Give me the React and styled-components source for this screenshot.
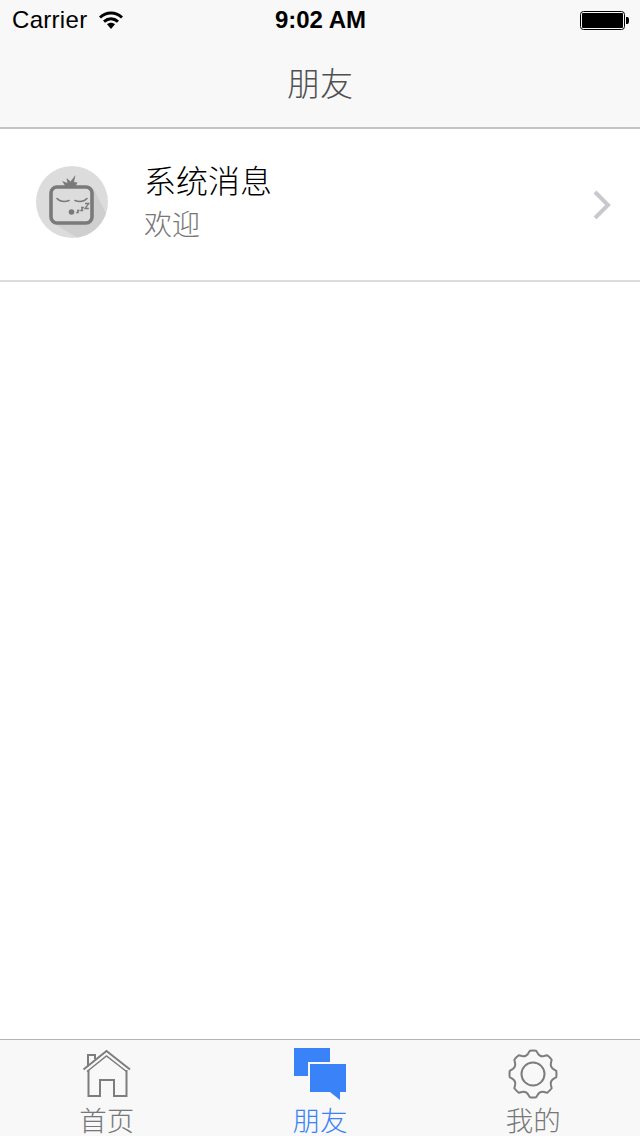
import React from 'react'
import styled, { createGlobalStyle } from 'styled-components'

const Global = createGlobalStyle`
  html, body {
    margin: 0;
    padding: 0;
    background: #fff;
  }
  * {
    box-sizing: border-box;
  }
`

const Page = styled.div`
  width: 640px;
  height: 1136px;
  display: flex;
  flex-direction: column;
  overflow: hidden;
  font-family: "Noto Sans CJK SC", "Liberation Sans", sans-serif;
  font-weight: 300;
`

const Header = styled.header`
  height: 129px;
  flex-shrink: 0;
  background: #f8f8f8;
  border-bottom: 2px solid #c4c4c4;
  display: flex;
  flex-direction: column;
`

const StatusBar = styled.div`
  height: 40px;
  padding: 0 11px 0 12px;
  display: grid;
  grid-template-columns: 1fr auto 1fr;
  align-items: center;
  font-family: "Liberation Sans", sans-serif;
  font-size: 24px;
  color: #000;
`

const Carrier = styled.div`
  display: flex;
  align-items: center;
  gap: 12px;
  font-weight: 400;
  letter-spacing: 0.3px;
`

const Clock = styled.div`
  font-weight: 700;
`

const BatteryWrap = styled.div`
  display: flex;
  justify-content: flex-end;
`

const NavTitle = styled.div`
  flex: 1;
  display: flex;
  align-items: center;
  justify-content: center;
  font-size: 33px;
  line-height: 1;
  color: #505050;
  padding-bottom: 3px;
`

const Main = styled.main`
  flex: 1;
  background: #fff;
`

const Row = styled.div`
  height: 153px;
  padding: 0 28px 5px 36px;
  display: flex;
  align-items: center;
  border-bottom: 2px solid #dcdcdc;
`

const Avatar = styled.svg`
  width: 72px;
  height: 72px;
  flex-shrink: 0;
`

const RowText = styled.div`
  flex: 1;
  margin: 0 0 5px 36px;
  display: flex;
  flex-direction: column;
  gap: 7px;
`

const RowTitle = styled.div`
  font-size: 32px;
  line-height: 40px;
  color: #000;
`

const RowSubtitle = styled.div`
  font-size: 28px;
  line-height: 34px;
  color: #777;
`

const ChevronIcon = styled.svg`
  width: 20px;
  height: 30px;
  flex-shrink: 0;
  margin-top: 6px;
`

const TabBar = styled.nav`
  height: 97px;
  flex-shrink: 0;
  background: #f8f8f8;
  border-top: 1px solid #b4b4b4;
  display: grid;
  grid-template-columns: repeat(3, 1fr);
`

const Tab = styled.div`
  display: flex;
  flex-direction: column;
  align-items: center;
  color: ${({ $active }) => ($active ? '#3a82f7' : '#777')};
`

const TabIcon = styled.svg`
  width: 56px;
  height: 54px;
  margin-top: 7px;
  flex-shrink: 0;
`

const TabLabel = styled.div`
  font-size: 27.5px;
  line-height: 28px;
  margin-top: 4px;
`

const Wifi = () => (
  <svg width="24" height="18" viewBox="0 0 24 18">
    <path d="M1 6.500C7.500 .6 16.500 .6 23 6.500" fill="none" stroke="#000" strokeWidth="3" />
    <path d="M5 10.600C9.300 6.900 14.700 6.900 19 10.600" fill="none" stroke="#000" strokeWidth="3" />
    <path d="M8 13.200C10.400 11.200 13.600 11.200 16 13.200L12 18Z" fill="#000" />
  </svg>
)

const Battery = () => (
  <svg width="49" height="19" viewBox="0 0 49 19">
    <rect x="0.5" y="0.5" width="44" height="18" rx="3" fill="none" stroke="#000" />
    <rect x="2" y="2" width="41" height="15" rx="1" fill="#000" />
    <path d="M46 6h1.500c1 0 1.500 1.500 1.500 3.500s-.5 3.500-1.500 3.500H46Z" fill="#000" />
  </svg>
)

const SleepyFace = () => (
  <Avatar viewBox="0 0 72 72">
    <circle cx="36" cy="36" r="36" fill="#dcdcdc" />
    <path d="M57 22L70 47A36 36 0 0 1 41 71.700L17 57Z" fill="#cfcfcf" />
    <path d="M30 21L26 15L31.500 17L30.500 12L34.500 15.500L39.500 9L38 16L41.500 16.500L39 21Z" fill="#7a7a7a" />
    <rect x="15" y="21" width="41" height="36" rx="6" fill="#dcdcdc" stroke="#7a7a7a" strokeWidth="3.600" />
    <path d="M21 32.500c3 3 8 3.500 12 2M39 34.500c4 1.500 9 1 12-2" fill="none" stroke="#7a7a7a" strokeWidth="1.600" strokeLinecap="round" />
    <circle cx="35.500" cy="46" r="2.800" fill="#7a7a7a" />
    <path d="M41 44.500h1.800l-1.800 2.200h1.800M45 41.500h2.200l-2.200 3h2.200M49 37.500h3.800l-3.800 5h3.800" fill="none" stroke="#7a7a7a" strokeWidth="1.300" />
  </Avatar>
)

const Chevron = () => (
  <ChevronIcon viewBox="0 0 20 30">
    <path d="M3 2L16 15L3 28" fill="none" stroke="#c8c8cd" strokeWidth="4" />
  </ChevronIcon>
)

const HomeIcon = () => (
  <TabIcon viewBox="0 0 56 54" fill="none" stroke="#7d7d7d" strokeWidth="2">
    <path d="M4.500 22.500L27.500 4L51 22.500" />
    <path d="M8 24.500L27.500 9L47.500 24.500" strokeWidth="1.500" />
    <path d="M9 19V8H16V12" />
    <path d="M9.500 23V49H21V33H35V49H47.500V23" />
  </TabIcon>
)

const ChatIcon = () => (
  <TabIcon viewBox="0 0 56 54">
    <path d="M2 1H38V15H16V29H2Z" fill="#3a82f7" />
    <path d="M18 17H54V45H48V53L38 45H18Z" fill="#3a82f7" />
  </TabIcon>
)

// 8 flat teeth round the centre, with rounded valleys between them
const gearPath = (cx, cy) => {
  const teeth = 8
  const step = (Math.PI * 2) / teeth
  const pt = (r, t) => `${(cx + r * Math.cos(t)).toFixed(2)} ${(cy + r * Math.sin(t)).toFixed(2)}`
  let d = ''
  for (let i = 0; i < teeth; i++) {
    const a = i * step - Math.PI / 2
    d += `${i === 0 ? 'M' : 'L'}${pt(23.5, a - step * 0.17)} A23.5 23.5 0 0 1 ${pt(23.5, a + step * 0.17)} `
    d += `L${pt(21, a + step * 0.3)} Q${pt(18.5, a + step * 0.5)} ${pt(21, a + step * 0.7)} `
  }
  return d + 'Z'
}

const GearIcon = () => (
  <TabIcon viewBox="0 0 56 54" fill="none" stroke="#7d7d7d" strokeWidth="2" strokeLinejoin="round">
    <path d={gearPath(28, 27)} />
    <circle cx="28" cy="27" r="11.500" />
  </TabIcon>
)

const App = () => {
  return (
    <Page>
      <Global />
      <Header>
        <StatusBar>
          <Carrier>
            Carrier
            <Wifi />
          </Carrier>
          <Clock>9:02 AM</Clock>
          <BatteryWrap>
            <Battery />
          </BatteryWrap>
        </StatusBar>
        <NavTitle>朋友</NavTitle>
      </Header>
      <Main>
        <Row>
          <SleepyFace />
          <RowText>
            <RowTitle>系统消息</RowTitle>
            <RowSubtitle>欢迎</RowSubtitle>
          </RowText>
          <Chevron />
        </Row>
      </Main>
      <TabBar>
        <Tab>
          <HomeIcon />
          <TabLabel>首页</TabLabel>
        </Tab>
        <Tab $active>
          <ChatIcon />
          <TabLabel>朋友</TabLabel>
        </Tab>
        <Tab>
          <GearIcon />
          <TabLabel>我的</TabLabel>
        </Tab>
      </TabBar>
    </Page>
  )
}

export default App
